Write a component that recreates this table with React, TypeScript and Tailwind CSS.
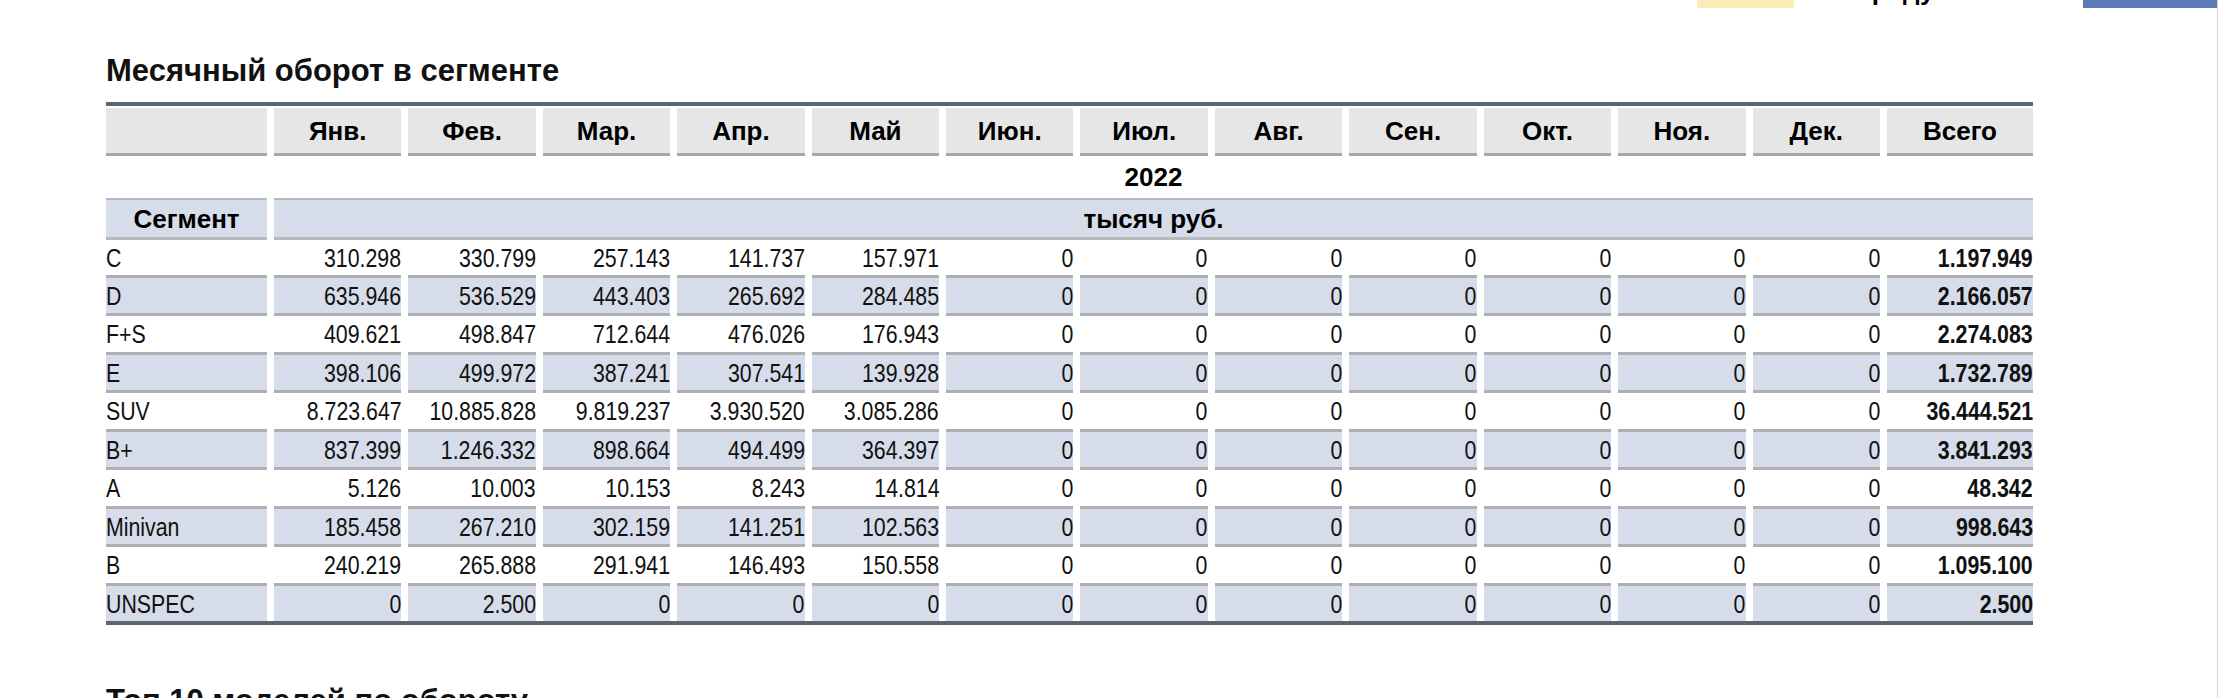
import React from "react";

const months = ["Янв.", "Фев.", "Мар.", "Апр.", "Май", "Июн.", "Июл.", "Авг.", "Сен.", "Окт.", "Ноя.", "Дек.", "Всего"];

type Row = { name: string; vals: string[]; total: string };

const z7 = ["0", "0", "0", "0", "0", "0", "0"];

const rows: Row[] = [
  { name: "C", vals: ["310.298", "330.799", "257.143", "141.737", "157.971", ...z7], total: "1.197.949" },
  { name: "D", vals: ["635.946", "536.529", "443.403", "265.692", "284.485", ...z7], total: "2.166.057" },
  { name: "F+S", vals: ["409.621", "498.847", "712.644", "476.026", "176.943", ...z7], total: "2.274.083" },
  { name: "E", vals: ["398.106", "499.972", "387.241", "307.541", "139.928", ...z7], total: "1.732.789" },
  { name: "SUV", vals: ["8.723.647", "10.885.828", "9.819.237", "3.930.520", "3.085.286", ...z7], total: "36.444.521" },
  { name: "B+", vals: ["837.399", "1.246.332", "898.664", "494.499", "364.397", ...z7], total: "3.841.293" },
  { name: "A", vals: ["5.126", "10.003", "10.153", "8.243", "14.814", ...z7], total: "48.342" },
  { name: "Minivan", vals: ["185.458", "267.210", "302.159", "141.251", "102.563", ...z7], total: "998.643" },
  { name: "B", vals: ["240.219", "265.888", "291.941", "146.493", "150.558", ...z7], total: "1.095.100" },
  { name: "UNSPEC", vals: ["0", "2.500", "0", "0", "0", ...z7], total: "2.500" },
];

const grid = "grid grid-cols-[161px_repeat(12,minmax(0,1fr))_146px] grid-rows-[100%] gap-x-[7px]";

function Narrow({ children, left }: { children: React.ReactNode; left?: boolean }) {
  return (
    <span
      className={`inline-block whitespace-nowrap scale-x-[0.82] ${left ? "origin-left" : "origin-right"}`}
    >
      {children}
    </span>
  );
}

function DataRow({ row, index }: { row: Row; index: number }) {
  const striped = index % 2 === 1;
  const last = index === rows.length - 1;
  let cell = "flex items-center min-w-0 ";
  let h = "";
  if (striped) {
    cell += last
      ? "bg-[#d6dce9] border-t-[3px] border-[#aeb0b3] "
      : "bg-[#d6dce9] border-t-[3px] border-b-[3px] border-[#aeb0b3] ";
    h = last ? "h-[38px]" : "h-[41px]";
  } else {
    h = index === 0 ? "h-[35px]" : "h-[36px]";
  }
  return (
    <div className={`${grid} ${h}`}>
      <div className={`${cell} justify-start`}>
        <Narrow left>{row.name}</Narrow>
      </div>
      {row.vals.map((v, i) => (
        <div key={i} className={`${cell} justify-end`}>
          <Narrow>{v}</Narrow>
        </div>
      ))}
      <div className={`${cell} justify-end font-bold`}>
        <Narrow>{row.total}</Narrow>
      </div>
    </div>
  );
}

export default function App() {
  return (
    <div className="relative w-full h-[698px] overflow-hidden bg-white text-black font-['Liberation_Sans',Arial,sans-serif]">
      {/* top-right fragments */}
      <div className="absolute left-[1697px] top-0 w-[97px] h-[8px] bg-[#fdecb8] rounded-b-[3px]" />
      <div className="absolute left-[1853px] top-[-22px] text-[26px] leading-none font-bold whitespace-nowrap">
        Продуктов
      </div>
      <div className="absolute left-[2083px] top-0 w-[134px] h-[8px] bg-[#5a7bb5]" />
      <div className="absolute right-0 top-0 h-full w-px bg-[#d4d4d4]" />

      <div className="pl-[106px] pt-[55px] w-[2033px]">
        <h2 className="h-[32px] leading-[32px] text-[31px] font-bold text-[#111] whitespace-nowrap">
          Месячный оборот в сегменте
        </h2>

        <div className="mt-[15px] w-[1927px] leading-none">
          <div className="h-[4px] bg-[#5c6670]" />
          <div className="h-[2px]" />

          {/* month header */}
          <div className={`${grid} h-[48px]`}>
            <div className="bg-[#e6e6e6] border-b-[3px] border-[#a8a8a8]" />
            {months.map((m) => (
              <div
                key={m}
                className="bg-[#e6e6e6] border-b-[3px] border-[#a8a8a8] flex items-center justify-center text-[26px] font-bold"
              >
                {m}
              </div>
            ))}
          </div>

          {/* year row */}
          <div className={`${grid} h-[42px]`}>
            <div />
            <div className="col-[2/15] flex items-center justify-center text-[26px] font-bold">2022</div>
          </div>

          {/* segment / unit row */}
          <div className={`${grid} h-[42px]`}>
            <div className="bg-[#d6dce9] border-t-2 border-b-[3px] border-[#b8babd] flex items-center justify-center text-[26px] font-bold">
              Сегмент
            </div>
            <div className="col-[2/15] bg-[#d6dce9] border-t-2 border-b-[3px] border-[#b8babd] flex items-center justify-center text-[26px] font-bold">
              тысяч руб.
            </div>
          </div>

          <div className="text-[26px] text-[#111]">
            {rows.map((r, i) => (
              <DataRow key={r.name} row={r} index={i} />
            ))}
          </div>
          <div className="h-[4px] bg-[#5c6670]" />
        </div>

        <h2 className="mt-[60px] h-[32px] leading-[32px] text-[31px] font-bold text-[#111] whitespace-nowrap">
          Топ 10 моделей по обороту
        </h2>
      </div>
    </div>
  );
}
